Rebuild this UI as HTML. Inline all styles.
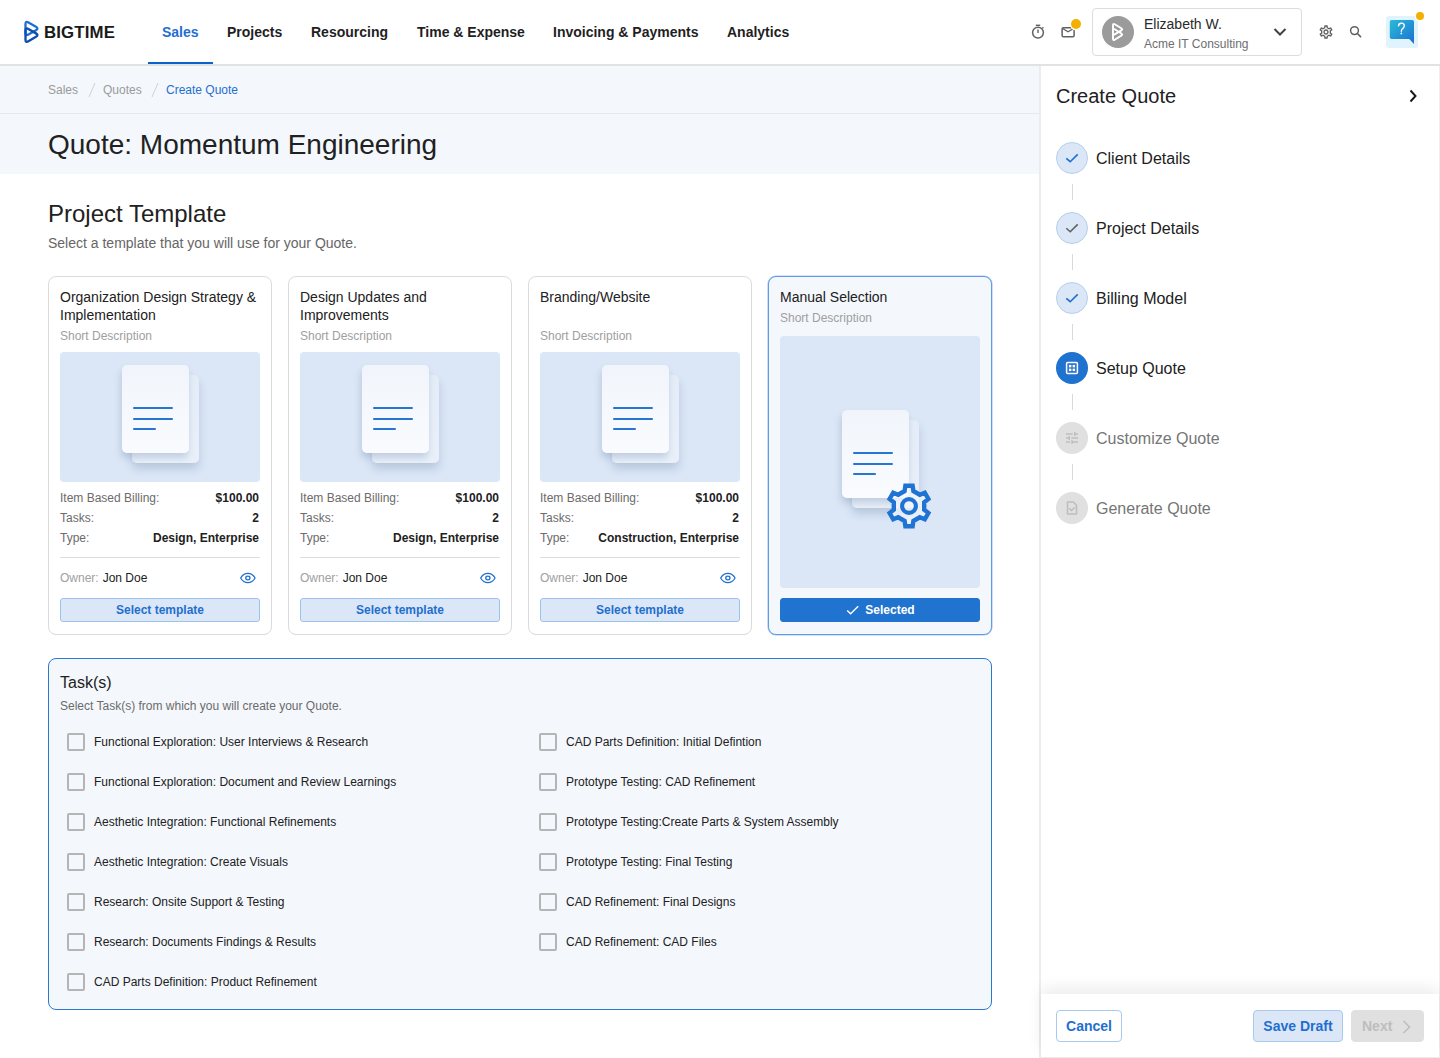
<!DOCTYPE html>
<html><head><meta charset="utf-8">
<style>
*{box-sizing:border-box;margin:0;padding:0}
html,body{width:1440px;height:1058px;overflow:hidden;background:#fff;font-family:"Liberation Sans",sans-serif;color:#222}
.abs{position:absolute}
#hdr{position:absolute;left:0;top:0;width:1440px;height:66px;background:#fff;border-bottom:2px solid #e2e2e2}
.nav{position:absolute;top:0;height:64px;line-height:64px;font-size:14px;font-weight:bold;color:#1f1f1f;white-space:nowrap}
.nav.act{color:#1f6fd0}
#ul{position:absolute;left:148px;top:62px;width:65px;height:2px;background:#0a63c9}
#main{position:absolute;left:0;top:66px;width:1039px;height:992px;background:#fff}
#bc{position:absolute;left:0;top:0;width:1039px;height:48px;background:#f4f7fc;border-bottom:1px solid #e5e9ee}
#ttl{position:absolute;left:0;top:48px;width:1039px;height:60px;background:#f4f7fc}
.bct{top:0;height:48px;line-height:48px;font-size:12px}
.card{position:absolute;top:210px;width:224px;height:359px;border:1px solid #dbdbdb;border-radius:8px;background:#fff}
.card.sel{border-color:#5f9de3;background:#f4f7fc;box-shadow:0 0 0 0.6px rgba(95,157,227,.55)}
.ct{position:absolute;left:11px;top:11px;font-size:14px;line-height:18px;color:#212121;width:205px}
.sd{position:absolute;left:11px;font-size:12px;line-height:16px;color:#a0a0a0}
.img{position:absolute;left:11px;top:75px;width:200px;height:130px;border-radius:4px;background:#dbe7f6;overflow:hidden}
.dback{position:absolute;left:72px;top:23px;width:67px;height:88px;border-radius:5px;background:linear-gradient(180deg,#e4ecf8,#e9f0f9);box-shadow:0 6px 9px rgba(60,90,140,.22)}
.dfront{position:absolute;left:62px;top:13px;width:67px;height:88px;border-radius:5px;background:linear-gradient(180deg,#f1f5fb,#f9fbfe);box-shadow:-1px 5px 7px rgba(60,90,140,.22)}
.dfront i{position:absolute;left:11px;height:2px;background:#2675d3;border-radius:1px}
.row{position:absolute;left:11px;width:199px;height:20px;line-height:20px;font-size:12px;display:flex;justify-content:space-between;color:#6b6b6b;white-space:nowrap}
.row b{color:#212121}
.sep{position:absolute;left:11px;top:280px;width:200px;height:1px;background:#dcdcdc}
.btn{position:absolute;left:11px;top:321px;width:200px;height:24px;line-height:22px;border:1px solid #9cc3ee;border-radius:3px;background:#dbe7f6;color:#1f6fd0;font-size:12px;font-weight:bold;text-align:center}
.btn.selb{background:#2074cf;border-color:#2074cf;color:#fff}
#tasks{position:absolute;left:48px;top:592px;width:944px;height:352px;border:1px solid #2a78d0;border-radius:8px;background:#f4f7fc}
.cb{position:absolute;width:18px;height:18px;border:2px solid #b5b5b5;border-radius:2px}
.tk{position:absolute;font-size:12px;line-height:18px;color:#212121;white-space:nowrap}
.stc{position:absolute;left:15px;width:32px;height:32px;border-radius:50%;display:flex;align-items:center;justify-content:center}
.stc.done{background:#dbe7f6;border:1px solid #b5d0ef}
.stc.cur{background:#2072cf}
.stc.todo{background:#e0e0e0}
.stt{position:absolute;left:55px;font-size:16px;line-height:20px;color:#212121;white-space:nowrap}
.stt.todo{color:#757575}
.stl{position:absolute;left:31px;width:1px;height:16px;background:#d9d9d9}
#foot{position:absolute;left:0;top:928px;width:398px;height:63px;background:#fff;box-shadow:0 -6px 14px rgba(0,0,0,.075)}
.fb{position:absolute;top:16px;height:32px;line-height:30px;border:1px solid;border-radius:4px;font-size:14px;font-weight:bold;color:#1f6fd0;text-align:center}
#panel{position:absolute;left:1039px;top:66px;width:401px;height:992px;background:#fff;border-left:2px solid #ececec;border-right:1px solid #eeeeee;border-bottom:1px solid #eeeeee}
</style></head>
<body>
<div id="hdr">
  <svg class="abs" style="left:22px;top:18px" width="20" height="28" viewBox="0 0 20 28">
    <path d="M3.50 6.20 Q3.50 2.80 6.45 4.49 L13.95 8.81 Q16.90 10.50 13.96 12.21 L6.44 16.59 Q3.50 18.30 3.50 14.90 Z" fill="none" stroke="#1d70d3" stroke-width="2.35"/>
    <path d="M3.50 12.60 Q3.50 9.20 6.43 10.93 L13.97 15.37 Q16.90 17.10 13.98 18.84 L6.42 23.36 Q3.50 25.10 3.50 21.70 Z" fill="none" stroke="#0b4fb1" stroke-width="2.35"/>
  </svg>
  <div class="abs" style="left:44px;top:1px;height:63px;line-height:63px;font-size:16px;font-weight:bold;color:#1a1a1a;letter-spacing:0.15px;transform:scaleX(1.05);transform-origin:0 50%">BIGTIME</div>
  <div class="nav act" style="left:162px">Sales</div>
  <div class="nav" style="left:227px">Projects</div>
  <div class="nav" style="left:311px">Resourcing</div>
  <div class="nav" style="left:417px">Time &amp; Expense</div>
  <div class="nav" style="left:553px">Invoicing &amp; Payments</div>
  <div class="nav" style="left:727px">Analytics</div>
  <div id="ul"></div>

  <svg class="abs" style="left:1030px;top:22px" width="16" height="18" viewBox="0 0 16 18">
    <circle cx="8" cy="10.6" r="5.4" fill="none" stroke="#616161" stroke-width="1.5"/>
    <line x1="5.8" y1="3.3" x2="10.2" y2="3.3" stroke="#616161" stroke-width="1.4"/>
    <line x1="8" y1="7.6" x2="8" y2="11" stroke="#616161" stroke-width="1.4"/>
    <line x1="12.2" y1="6.4" x2="13.4" y2="5.2" stroke="#616161" stroke-width="1.3"/>
  </svg>
  <svg class="abs" style="left:1060px;top:16px" width="26" height="24" viewBox="0 0 26 24">
    <rect x="2.1" y="11.7" width="12" height="9" rx="1.2" fill="none" stroke="#616161" stroke-width="1.5"/>
    <path d="M2.5 12.5 L8.1 15.8 L13.7 12.5" fill="none" stroke="#616161" stroke-width="1.4"/>
    <circle cx="16" cy="8" r="6.3" fill="#fff"/>
    <circle cx="16" cy="8" r="5" fill="#f4b000"/>
  </svg>
  <div class="abs" style="left:1092px;top:8px;width:210px;height:48px;border:1px solid #dcdcdc;border-radius:4px;background:#fff">
    <div class="abs" style="left:9px;top:7px;width:32px;height:32px;border-radius:50%;background:#9b9b9b"></div>
    <svg class="abs" style="left:16px;top:11px" width="18" height="24" viewBox="0 0 18 24">
      <path d="M4.00 5.20 Q4.00 3.20 5.71 4.24 L12.29 8.26 Q14.00 9.30 12.29 10.34 L5.71 14.36 Q4.00 15.40 4.00 13.40 Z" fill="none" stroke="#fff" stroke-width="1.9"/>
      <path d="M4.00 10.20 Q4.00 8.20 5.68 9.28 L12.32 13.52 Q14.00 14.60 12.30 15.65 L5.70 19.75 Q4.00 20.80 4.00 18.80 Z" fill="none" stroke="#fff" stroke-width="1.9"/>
    </svg>
    <div class="abs" style="left:51px;top:6px;font-size:14px;line-height:18px;color:#2a2a2a;white-space:nowrap">Elizabeth W.</div>
    <div class="abs" style="left:51px;top:27px;font-size:12px;line-height:16px;color:#6e6e6e;white-space:nowrap">Acme IT Consulting</div>
    <svg class="abs" style="left:180px;top:18px" width="14" height="10" viewBox="0 0 14 10"><path d="M1.5 2 L7 7.5 L12.5 2" fill="none" stroke="#424242" stroke-width="2"/></svg>
  </div>
  <svg class="abs" style="left:1318px;top:24px" width="16" height="16" viewBox="0 0 24 24">
    <path fill="#616161" d="M19.43 12.98c.04-.32.07-.64.07-.98 0-.34-.03-.66-.07-.98l2.11-1.65c.19-.15.24-.42.12-.64l-2-3.46a.5.5 0 0 0-.61-.22l-2.49 1c-.52-.4-1.08-.73-1.69-.98l-.38-2.65A.488.488 0 0 0 14 2h-4c-.25 0-.46.18-.49.42l-.38 2.65c-.61.25-1.17.59-1.69.98l-2.49-1a.566.566 0 0 0-.18-.03c-.17 0-.34.09-.43.25l-2 3.46c-.13.22-.07.49.12.64l2.11 1.65c-.04.32-.07.65-.07.98 0 .33.03.66.07.98l-2.11 1.65c-.19.15-.24.42-.12.64l2 3.46a.5.5 0 0 0 .61.22l2.49-1c.52.4 1.08.73 1.69.98l.38 2.65c.03.24.24.42.49.42h4c.25 0 .46-.18.49-.42l.38-2.65c.61-.25 1.17-.59 1.69-.98l2.49 1c.6.02.12.03.18.03.17 0 .34-.09.43-.25l2-3.46c.12-.22.07-.49-.12-.64l-2.11-1.65zm-1.98-1.71c.04.31.05.52.05.73 0 .21-.02.43-.05.73l-.14 1.13.89.7 1.08.84-.7 1.21-1.27-.51-1.04-.42-.9.68c-.43.32-.84.56-1.25.73l-1.06.43-.16 1.13-.2 1.35h-1.4l-.19-1.35-.16-1.13-1.06-.43c-.43-.18-.83-.41-1.23-.71l-.91-.7-1.06.43-1.27.51-.7-1.21 1.08-.84.89-.7-.14-1.13c-.03-.31-.05-.54-.05-.74s.02-.43.05-.73l.14-1.13-.89-.7-1.08-.84.7-1.21 1.27.51 1.04.42.9-.68c.43-.32.84-.56 1.25-.73l1.06-.43.16-1.13.2-1.35h1.39l.19 1.35.16 1.13 1.06.43c.43.18.83.41 1.23.71l.91.7 1.06-.43 1.27-.51.7 1.21-1.07.85-.89.7.14 1.13zM12 8c-2.21 0-4 1.79-4 4s1.79 4 4 4 4-1.79 4-4-1.79-4-4-4zm0 6c-1.1 0-2-.9-2-2s.9-2 2-2 2 .9 2 2-.9 2-2 2z"/>
  </svg>
  <svg class="abs" style="left:1348px;top:24px" width="16" height="16" viewBox="0 0 16 16">
    <circle cx="6.5" cy="6.6" r="3.9" fill="none" stroke="#616161" stroke-width="1.5"/>
    <line x1="9.4" y1="9.5" x2="13" y2="13.1" stroke="#616161" stroke-width="1.6"/>
  </svg>
  <div class="abs" style="left:1386px;top:16px;width:32px;height:32px;border-radius:3px;background:#e1f3fc"></div>
  <svg class="abs" style="left:1386px;top:16px" width="32" height="32" viewBox="0 0 32 32">
    <defs><linearGradient id="hg" x1="0" y1="0" x2="1" y2="1"><stop offset="0" stop-color="#29bcd9"/><stop offset="1" stop-color="#1e6fd0"/></linearGradient></defs>
    <path d="M5.6 3.9 H26.2 a1.8 1.8 0 0 1 1.8 1.8 V27.9 L23.2 23 H5.6 a1.8 1.8 0 0 1 -1.8 -1.8 V5.7 a1.8 1.8 0 0 1 1.8 -1.8 Z" fill="url(#hg)"/>
    <path d="M12.5 9.9 Q12.7 7.2 15.5 7.2 Q18.3 7.3 18.3 9.8 Q18.3 11.2 16.8 12.5 Q15.3 13.8 15.3 15.3" fill="none" stroke="#fff" stroke-width="1.35" stroke-linecap="round"/><circle cx="15.3" cy="17.4" r="0.85" fill="#fff"/>
  </svg>
  <div class="abs" style="left:1414.5px;top:10.5px;width:11px;height:11px;border-radius:50%;background:#fff"></div><div class="abs" style="left:1416px;top:12px;width:8px;height:8px;border-radius:50%;background:#f4b000"></div>
</div>

<div id="main">
  <div id="bc">
    <div class="abs bct" style="left:48px;color:#9a9a9a">Sales</div>
    <svg class="abs" style="left:87.5px;top:16px" width="8" height="16"><line x1="7" y1="1" x2="1" y2="15" stroke="#d2d2d2" stroke-width="1"/></svg>
    <div class="abs bct" style="left:103px;color:#9a9a9a">Quotes</div>
    <svg class="abs" style="left:150.5px;top:16px" width="8" height="16"><line x1="7" y1="1" x2="1" y2="15" stroke="#d2d2d2" stroke-width="1"/></svg>
    <div class="abs bct" style="left:166px;color:#1f6fd0">Create Quote</div>
  </div>
  <div id="ttl"><div class="abs" style="left:48px;top:1px;height:59px;line-height:59px;font-size:28px;color:#212121">Quote: Momentum Engineering</div></div>
  <div class="abs" style="left:48px;top:133px;font-size:24px;line-height:30px;color:#212121">Project Template</div>
  <div class="abs" style="left:48px;top:168px;font-size:14px;line-height:18px;color:#666">Select a template that you will use for your Quote.</div>
  <div class="card" style="left:48px">
    <div class="ct">Organization Design Strategy &amp;<br>Implementation</div>
    <div class="sd" style="top:51px">Short Description</div>
    <div class="img"><div class="dback"></div><div class="dfront"><i style="top:42px;width:40px"></i><i style="top:52.5px;width:40px"></i><i style="top:63px;width:23px"></i></div></div>
    <div class="row" style="top:211px"><span>Item Based Billing:</span><b>$100.00</b></div>
    <div class="row" style="top:231px"><span>Tasks:</span><b>2</b></div>
    <div class="row" style="top:251px"><span>Type:</span><b>Design, Enterprise</b></div>
    <div class="sep"></div>
    <div class="row" style="top:291px"><span><span style="color:#a0a0a0">Owner:</span><span style="color:#212121;margin-left:4px">Jon Doe</span></span></div>
    <svg class="abs" style="left:191px;top:294px" width="15.72" height="14" viewBox="0 0 24 24" preserveAspectRatio="none"><path d="M1 12s4-8 11-8 11 8 11 8-4 8-11 8-11-8-11-8z" fill="none" stroke="#1f6fd0" stroke-width="1.9"/><circle cx="12" cy="12" r="3.2" fill="none" stroke="#1f6fd0" stroke-width="2"/></svg>
    <div class="btn">Select template</div>
  </div><div class="card" style="left:288px">
    <div class="ct">Design Updates and<br>Improvements</div>
    <div class="sd" style="top:51px">Short Description</div>
    <div class="img"><div class="dback"></div><div class="dfront"><i style="top:42px;width:40px"></i><i style="top:52.5px;width:40px"></i><i style="top:63px;width:23px"></i></div></div>
    <div class="row" style="top:211px"><span>Item Based Billing:</span><b>$100.00</b></div>
    <div class="row" style="top:231px"><span>Tasks:</span><b>2</b></div>
    <div class="row" style="top:251px"><span>Type:</span><b>Design, Enterprise</b></div>
    <div class="sep"></div>
    <div class="row" style="top:291px"><span><span style="color:#a0a0a0">Owner:</span><span style="color:#212121;margin-left:4px">Jon Doe</span></span></div>
    <svg class="abs" style="left:191px;top:294px" width="15.72" height="14" viewBox="0 0 24 24" preserveAspectRatio="none"><path d="M1 12s4-8 11-8 11 8 11 8-4 8-11 8-11-8-11-8z" fill="none" stroke="#1f6fd0" stroke-width="1.9"/><circle cx="12" cy="12" r="3.2" fill="none" stroke="#1f6fd0" stroke-width="2"/></svg>
    <div class="btn">Select template</div>
  </div><div class="card" style="left:528px">
    <div class="ct">Branding/Website</div>
    <div class="sd" style="top:51px">Short Description</div>
    <div class="img"><div class="dback"></div><div class="dfront"><i style="top:42px;width:40px"></i><i style="top:52.5px;width:40px"></i><i style="top:63px;width:23px"></i></div></div>
    <div class="row" style="top:211px"><span>Item Based Billing:</span><b>$100.00</b></div>
    <div class="row" style="top:231px"><span>Tasks:</span><b>2</b></div>
    <div class="row" style="top:251px"><span>Type:</span><b>Construction, Enterprise</b></div>
    <div class="sep"></div>
    <div class="row" style="top:291px"><span><span style="color:#a0a0a0">Owner:</span><span style="color:#212121;margin-left:4px">Jon Doe</span></span></div>
    <svg class="abs" style="left:191px;top:294px" width="15.72" height="14" viewBox="0 0 24 24" preserveAspectRatio="none"><path d="M1 12s4-8 11-8 11 8 11 8-4 8-11 8-11-8-11-8z" fill="none" stroke="#1f6fd0" stroke-width="1.9"/><circle cx="12" cy="12" r="3.2" fill="none" stroke="#1f6fd0" stroke-width="2"/></svg>
    <div class="btn">Select template</div>
  </div>
  <div class="card sel" style="left:768px">
    <div class="ct">Manual Selection</div>
    <div class="sd" style="top:33px">Short Description</div>
    <div class="img" style="top:59px;height:252px"><div class="dback" style="left:72px;top:84px"></div><div class="dfront" style="left:62px;top:74px"><i style="top:42px;width:40px"></i><i style="top:52.5px;width:40px"></i><i style="top:63px;width:23px"></i></div>
      <svg class="abs" style="left:103px;top:144px" width="52" height="52" viewBox="-26 -26 52 52"><path d="M-4.40 -15.00 L-3.60 -20.30 L3.60 -20.30 L4.40 -15.00 L10.79 -11.31 L15.78 -13.27 L19.38 -7.03 L15.19 -3.69 L15.19 3.69 L19.38 7.03 L15.78 13.27 L10.79 11.31 L4.40 15.00 L3.60 20.30 L-3.60 20.30 L-4.40 15.00 L-10.79 11.31 L-15.78 13.27 L-19.38 7.03 L-15.19 3.69 L-15.19 -3.69 L-19.38 -7.03 L-15.78 -13.27 L-10.79 -11.31 Z" fill="rgba(242,246,252,0.72)" stroke="#1f73d2" stroke-width="4.4" stroke-linejoin="miter"/><circle cx="0" cy="0" r="6.9" fill="none" stroke="#1f73d2" stroke-width="4.1"/></svg>
    </div>
    <div class="btn selb"><svg width="13" height="10" viewBox="0 0 13 10" style="vertical-align:-1px;margin-right:6px;margin-left:1px"><path d="M1.2 5.4 L4.6 8.7 L12.2 1.2" fill="none" stroke="#fff" stroke-width="1.4"/></svg>Selected</div>
  </div>
  <div id="tasks">
    <div class="abs" style="left:11px;top:14px;font-size:16px;line-height:20px;color:#212121">Task(s)</div>
    <div class="abs" style="left:11px;top:39px;font-size:12px;line-height:16px;color:#6b6b6b">Select Task(s) from which you will create your Quote.</div>
<div class="cb" style="left:18px;top:74px"></div><div class="tk" style="left:45px;top:74px">Functional Exploration: User Interviews &amp; Research</div>
<div class="cb" style="left:18px;top:114px"></div><div class="tk" style="left:45px;top:114px">Functional Exploration: Document and Review Learnings</div>
<div class="cb" style="left:18px;top:154px"></div><div class="tk" style="left:45px;top:154px">Aesthetic Integration: Functional Refinements</div>
<div class="cb" style="left:18px;top:194px"></div><div class="tk" style="left:45px;top:194px">Aesthetic Integration: Create Visuals</div>
<div class="cb" style="left:18px;top:234px"></div><div class="tk" style="left:45px;top:234px">Research: Onsite Support &amp; Testing</div>
<div class="cb" style="left:18px;top:274px"></div><div class="tk" style="left:45px;top:274px">Research: Documents Findings &amp; Results</div>
<div class="cb" style="left:18px;top:314px"></div><div class="tk" style="left:45px;top:314px">CAD Parts Definition: Product Refinement</div>
<div class="cb" style="left:490px;top:74px"></div><div class="tk" style="left:517px;top:74px">CAD Parts Definition: Initial Defintion</div>
<div class="cb" style="left:490px;top:114px"></div><div class="tk" style="left:517px;top:114px">Prototype Testing: CAD Refinement</div>
<div class="cb" style="left:490px;top:154px"></div><div class="tk" style="left:517px;top:154px">Prototype Testing:Create Parts &amp; System Assembly</div>
<div class="cb" style="left:490px;top:194px"></div><div class="tk" style="left:517px;top:194px">Prototype Testing: Final Testing</div>
<div class="cb" style="left:490px;top:234px"></div><div class="tk" style="left:517px;top:234px">CAD Refinement: Final Designs</div>
<div class="cb" style="left:490px;top:274px"></div><div class="tk" style="left:517px;top:274px">CAD Refinement: CAD Files</div>
  </div>
</div>

<div id="panel">
  <div class="abs" style="left:15px;top:18px;font-size:20px;line-height:24px;color:#212121">Create Quote</div>
  <svg class="abs" style="left:367px;top:23px" width="10" height="14" viewBox="0 0 10 14"><path d="M2.5 1.5 L7.5 7 L2.5 12.5" fill="none" stroke="#1a1a1a" stroke-width="2"/></svg>
<div class="stc done" style="top:76px"><svg width="14" height="14" viewBox="0 0 14 14"><path d="M1.3 7.3 L5.2 10.7 L12.7 3.4" fill="none" stroke="#1f6fd0" stroke-width="1.6"/></svg></div><div class="stt done" style="top:83px">Client Details</div>
<div class="stl" style="top:118px"></div>
<div class="stc done" style="top:146px"><svg width="14" height="14" viewBox="0 0 14 14"><path d="M1.3 7.3 L5.2 10.7 L12.7 3.4" fill="none" stroke="#5f5f5f" stroke-width="1.5"/></svg></div><div class="stt done" style="top:153px">Project Details</div>
<div class="stl" style="top:188px"></div>
<div class="stc done" style="top:216px"><svg width="14" height="14" viewBox="0 0 14 14"><path d="M1.3 7.3 L5.2 10.7 L12.7 3.4" fill="none" stroke="#1f6fd0" stroke-width="1.6"/></svg></div><div class="stt done" style="top:223px">Billing Model</div>
<div class="stl" style="top:258px"></div>
<div class="stc cur" style="top:286px"><svg width="14" height="14" viewBox="0 0 14 14"><rect x="1.6" y="1.6" width="10.8" height="10.8" rx="1" fill="none" stroke="#fff" stroke-width="1.5"/><rect x="3.9" y="3.9" width="2.5" height="2.5" fill="#fff"/><rect x="7.6" y="3.9" width="2.5" height="2.5" fill="#fff"/><rect x="3.9" y="7.6" width="2.5" height="2.5" fill="#fff"/><rect x="7.6" y="7.6" width="2.5" height="2.5" fill="#fff"/></svg></div><div class="stt cur" style="top:293px">Setup Quote</div>
<div class="stl" style="top:328px"></div>
<div class="stc todo" style="top:356px"><svg width="16" height="16" viewBox="0 0 24 24" fill="#bdbdbd"><path d="M3 17v2h6v-2H3zM3 5v2h10V5H3zm10 16v-2h8v-2h-8v-2h-2v6h2zM7 9v2H3v2h4v2h2V9H7zm14 4v-2H11v2h10zm-6-4h2V7h4V5h-4V3h-2v6z"/></svg></div><div class="stt todo" style="top:363px">Customize Quote</div>
<div class="stl" style="top:398px"></div>
<div class="stc todo" style="top:426px"><svg width="16" height="16" viewBox="0 0 16 16"><path d="M3.5 2 H9.3 L12.5 5.2 V14 H3.5 Z" fill="none" stroke="#bdbdbd" stroke-width="1.5" stroke-linejoin="round"/><path d="M5.1 8.3 L7.5 10.6 L11 7.2" fill="none" stroke="#bdbdbd" stroke-width="1.4"/></svg></div><div class="stt todo" style="top:433px">Generate Quote</div>

  <div id="foot">
    <div class="fb" style="left:15px;width:66px;background:#fff;border-color:#a9c9ee">Cancel</div>
    <div class="fb" style="left:212px;width:90px;background:#dbe7f6;border-color:#a9c9ee">Save Draft</div>
    <div class="fb" style="left:310px;width:73px;background:#e0e0e0;border-color:#e0e0e0;color:#bdbdbd;text-align:left;padding-left:10px">Next<svg class="abs" style="left:50px;top:9px" width="10" height="14" viewBox="0 0 10 14"><path d="M1.5 1 L7.5 7 L1.5 13" fill="none" stroke="#bdbdbd" stroke-width="1.5"/></svg></div>
  </div>
</div>
</body></html>
